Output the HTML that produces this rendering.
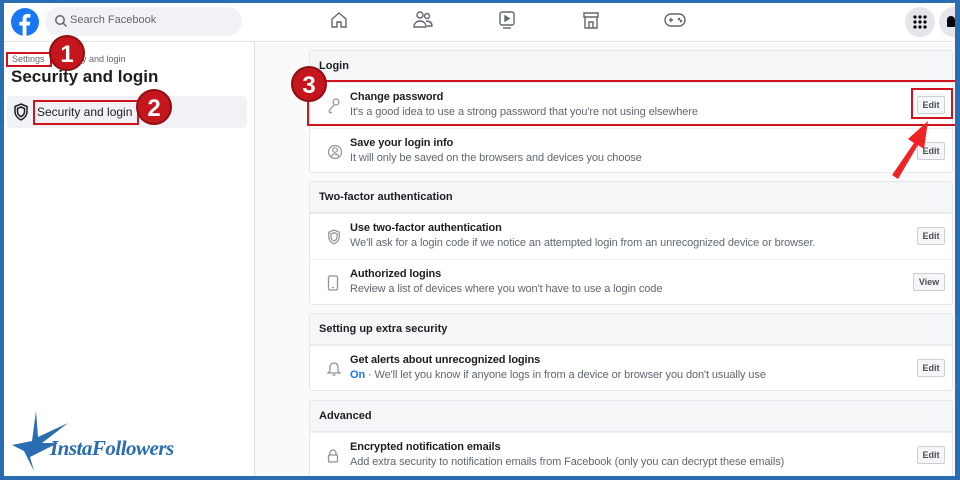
<!DOCTYPE html>
<html><head><style>
*{margin:0;padding:0;box-sizing:border-box}
body{width:960px;height:480px;overflow:hidden;background:#2a6db0;font-family:"Liberation Sans",Arial,sans-serif;position:relative}
.in{position:absolute;left:4px;top:3px;width:951px;height:473px;background:#fafafa;overflow:hidden}
.a{position:absolute}
.hdr{left:0;top:0;width:951px;height:39px;background:#fff;border-bottom:1px solid #e4e6eb}
.side{left:0;top:39px;width:251px;height:440px;background:#fff;border-right:1px solid #e0e0e0}
.card{position:absolute;left:305px;width:644px;background:#fff;border:1px solid #e6e7ea;border-radius:3px;overflow:hidden}
.ch{height:31px;background:#f5f6f7;border-bottom:1px solid #e6e7ea;font-size:11px;font-weight:bold;color:#1c1e21;padding:9px 0 0 9px}
.row{position:relative;height:46px;border-top:1px solid #eee}
.row:first-of-type{border-top:none}
.t1{position:absolute;left:40px;top:8px;font-size:11px;color:#1c1e21;font-weight:bold;letter-spacing:-0.1px}
.t2{position:absolute;left:40px;top:23px;font-size:11px;color:#606770;letter-spacing:-0.1px}
.btn{position:absolute;right:7px;top:13px;width:28px;height:18px;border:1px solid #ccd0d5;background:#f5f6f7;font-size:9px;font-weight:bold;color:#4b4f56;text-align:center;line-height:16px;border-radius:2px}
.ic{position:absolute;left:17px;top:15px}
.badge{position:absolute;width:36px;height:36px;border-radius:50%;background:#c4161c;color:#fff;font-weight:bold;font-size:24px;text-align:center;line-height:36px;border:2px solid #8e0f13}
.rb{position:absolute;border:2px solid #d0141b}
</style></head><body>
<div class="in">
<div class="a hdr"></div>
<svg class="a" style="left:6px;top:4px" width="30" height="30" viewBox="0 0 30 30"><circle cx="15" cy="15" r="14" fill="#1877f2"/><path d="M16.5 29V18.5h3.3l.5-3.8h-3.8v-2.4c0-1.1.3-1.8 1.9-1.8h2V7.1c-.4 0-1.6-.2-2.9-.2-2.9 0-4.9 1.8-4.9 5v2.8H9.3v3.8h3.3V29z" fill="#fff"/></svg>
<div class="a" style="left:41px;top:4px;width:197px;height:29px;border-radius:15px;background:#f0f2f5"></div>
<svg class="a" style="left:50px;top:11px" width="14" height="14" viewBox="0 0 14 14"><circle cx="6" cy="6" r="4.2" fill="none" stroke="#65676b" stroke-width="1.5"/><path d="M9 9l3.5 3.5" stroke="#65676b" stroke-width="1.5"/></svg>
<div class="a" style="left:66px;top:11px;font-size:11px;color:#65676b">Search Facebook</div>
<svg class="a" style="left:325px;top:7px" width="20" height="20" viewBox="0 0 20 20" fill="none" stroke="#606770" stroke-width="1.4"><path d="M3 9l7-6 7 6v8h-5v-5H8v5H3z"/></svg>
<svg class="a" style="left:408px;top:7px" width="22" height="20" viewBox="0 0 22 20" fill="none" stroke="#606770" stroke-width="1.4"><circle cx="8" cy="5" r="3"/><circle cx="15" cy="6" r="2.5"/><path d="M2 17c0-4 3-6 6-6s6 2 6 6zM14 11c3 0 6 1 6 5h-5"/></svg>
<svg class="a" style="left:494px;top:7px" width="18" height="20" viewBox="0 0 18 20" fill="none" stroke="#606770" stroke-width="1.4"><rect x="2" y="2" width="14" height="13" rx="2"/><path d="M7 6v5l4-2.5z" fill="#606770"/><path d="M5 18h8"/></svg>
<svg class="a" style="left:578px;top:7px" width="18" height="20" viewBox="0 0 18 20" fill="none" stroke="#606770" stroke-width="1.4"><path d="M2 3h14v4H2zM3 7v11h12V7M7 18v-6h4v6"/></svg>
<svg class="a" style="left:659px;top:9px" width="24" height="16" viewBox="0 0 24 16" fill="none" stroke="#606770" stroke-width="1.4"><rect x="2" y="2" width="20" height="12" rx="6"/><path d="M6 8h4M8 6v4"/><circle cx="16" cy="7" r=".6" fill="#606770"/><circle cx="18" cy="9" r=".6" fill="#606770"/></svg>
<div class="a" style="left:901px;top:4px;width:30px;height:30px;border-radius:50%;background:#e4e6eb"></div>
<svg class="a" style="left:909px;top:12px" width="14" height="14" viewBox="0 0 14 14" fill="#050505"><circle cx="2" cy="2" r="1.6"/><circle cx="7" cy="2" r="1.6"/><circle cx="12" cy="2" r="1.6"/><circle cx="2" cy="7" r="1.6"/><circle cx="7" cy="7" r="1.6"/><circle cx="12" cy="7" r="1.6"/><circle cx="2" cy="12" r="1.6"/><circle cx="7" cy="12" r="1.6"/><circle cx="12" cy="12" r="1.6"/></svg>
<div class="a" style="left:935px;top:4px;width:30px;height:30px;border-radius:50%;background:#e4e6eb"></div>
<div class="a" style="left:943px;top:13px;width:8px;height:11px;background:#050505;border-radius:4px 4px 1px 1px"></div>

<div class="a side"></div>
<div class="a" style="left:8px;top:51px;font-size:9px;color:#65676b">Settings &nbsp;&nbsp;&nbsp;&nbsp;&nbsp;&nbsp;&nbsp;&nbsp;&nbsp;&nbsp;&nbsp;&nbsp;&nbsp;ty and login</div>
<div class="rb" style="left:2px;top:49px;width:46px;height:15px"></div>
<div class="a" style="left:7px;top:64px;font-size:17px;font-weight:bold;color:#1c1e21">Security and login</div>
<div class="a" style="left:3px;top:93px;width:240px;height:32px;background:#f0f2f5;border-radius:5px"></div>
<svg class="a" style="left:9px;top:100px" width="16" height="18" viewBox="0 0 16 18" fill="none" stroke="#1c1e21" stroke-width="1.5"><path d="M8 1l6 2.5v5c0 4-3 7-6 8.5-3-1.5-6-4.5-6-8.5v-5z"/><path d="M8 4l3.5 1.5v3c0 2.5-1.8 4.3-3.5 5.2-1.7-.9-3.5-2.7-3.5-5.2v-3z"/></svg>
<div class="a" style="left:33px;top:102px;font-size:12px;color:#1c1e21">Security and login</div>
<div class="rb" style="left:29px;top:97px;width:106px;height:25px"></div>
<div class="badge" style="left:45px;top:32px">1</div>
<div class="badge" style="left:132px;top:86px">2</div>

<div class="card" style="top:47px;height:123px"><div class="ch">Login</div>
<div class="row"><svg class="ic" width="14" height="16" viewBox="0 0 14 16" fill="none" stroke="#8d949e" stroke-width="1.2"><circle cx="9" cy="4" r="3"/><path d="M7 7l-5 6 1 2 2-1"/></svg><div class="t1">Change password</div><div class="t2">It's a good idea to use a strong password that you're not using elsewhere</div><div class="btn">Edit</div></div>
<div class="row"><svg class="ic" width="16" height="16" viewBox="0 0 16 16" fill="none" stroke="#8d949e" stroke-width="1.2"><circle cx="8" cy="8" r="6.5"/><circle cx="8" cy="6" r="2.3"/><path d="M4 12.5c1-2 2.5-2.5 4-2.5s3 .5 4 2.5"/></svg><div class="t1">Save your login info</div><div class="t2">It will only be saved on the browsers and devices you choose</div><div class="btn">Edit</div></div></div>

<div class="card" style="top:178px;height:124px"><div class="ch">Two-factor authentication</div>
<div class="row"><svg class="ic" width="14" height="16" viewBox="0 0 16 18" fill="none" stroke="#8d949e" stroke-width="1.4"><path d="M8 1l6 2.5v5c0 4-3 7-6 8.5-3-1.5-6-4.5-6-8.5v-5z"/><path d="M8 4l3.5 1.5v3c0 2.5-1.8 4.3-3.5 5.2-1.7-.9-3.5-2.7-3.5-5.2v-3z"/></svg><div class="t1">Use two-factor authentication</div><div class="t2">We'll ask for a login code if we notice an attempted login from an unrecognized device or browser.</div><div class="btn">Edit</div></div>
<div class="row"><svg class="ic" width="12" height="16" viewBox="0 0 12 16" fill="none" stroke="#8d949e" stroke-width="1.3"><rect x="1.5" y="1" width="9" height="14" rx="1.5"/><path d="M5 12.5h2"/></svg><div class="t1">Authorized logins</div><div class="t2">Review a list of devices where you won't have to use a login code</div><div class="btn" style="width:32px">View</div></div></div>

<div class="card" style="top:310px;height:78px"><div class="ch">Setting up extra security</div>
<div class="row"><svg class="ic" width="14" height="16" viewBox="0 0 14 16" fill="none" stroke="#8d949e" stroke-width="1.2"><path d="M7 2c-3 0-4 2-4 5v3l-2 2h12l-2-2V7c0-3-1-5-4-5zM5.5 14h3"/></svg><div class="t1">Get alerts about unrecognized logins</div><div class="t2"><b style="color:#1877f2">On</b> · We'll let you know if anyone logs in from a device or browser you don't usually use</div><div class="btn">Edit</div></div></div>

<div class="card" style="top:397px;height:80px"><div class="ch">Advanced</div>
<div class="row"><svg class="ic" width="12" height="16" viewBox="0 0 12 16" fill="none" stroke="#8d949e" stroke-width="1.3"><path d="M3 7V5a3 3 0 016 0v2"/><rect x="1.5" y="7" width="9" height="7" rx="1"/></svg><div class="t1">Encrypted notification emails</div><div class="t2">Add extra security to notification emails from Facebook (only you can decrypt these emails)</div><div class="btn">Edit</div></div></div>

<div class="rb" style="left:303px;top:77px;width:650px;height:46px"></div>
<div class="rb" style="left:907px;top:85px;width:42px;height:31px"></div>
<div class="badge" style="left:287px;top:63px">3</div>
<svg class="a" style="left:880px;top:110px" width="50" height="66" viewBox="0 0 50 66"><path d="M8 62L30 30 24 26 44 8 40 36 34 32 14 66z" fill="#ee2424"/></svg>

<svg class="a" style="left:8px;top:408px" width="60" height="60" viewBox="0 0 60 60" fill="#2a6db0"><path d="M24 0l2 26 30-14-26 20 16 0-28 14 4 14-10-20L0 34l20-4z"/></svg>
<div class="a" style="left:46px;top:433px;font-family:'Liberation Serif',serif;font-style:italic;font-weight:bold;font-size:21px;color:#2a6db0;letter-spacing:-0.5px">InstaFollowers</div>
</div>
</body></html>
